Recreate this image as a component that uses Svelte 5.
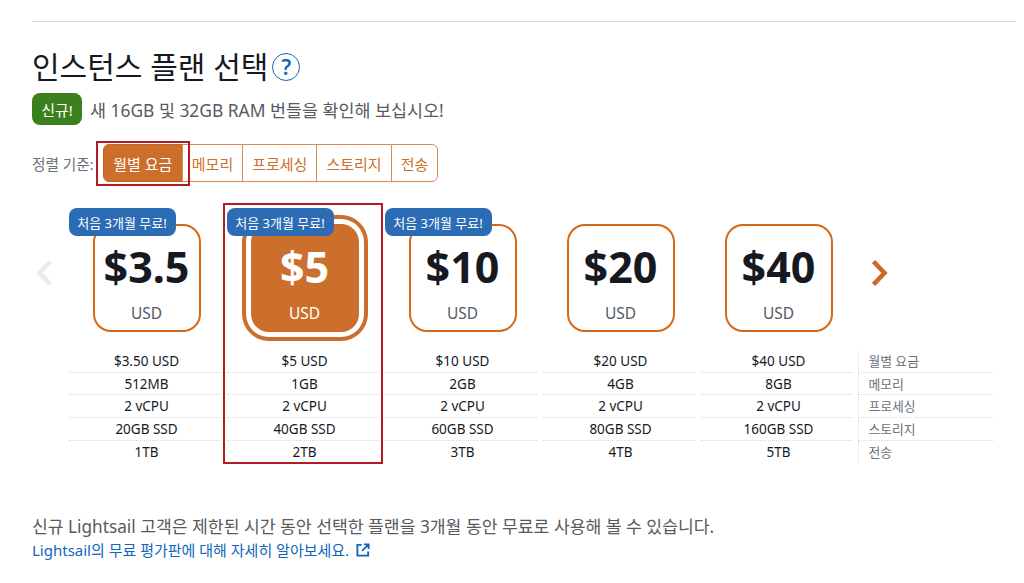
<script lang="ts">
	const sorts = ['월별 요금', '메모리', '프로세싱', '스토리지', '전송'];
	const plans = [
		{ price: '$3.5', monthly: '$3.50 USD', memory: '512MB', cpu: '2 vCPU', disk: '20GB SSD', transfer: '1TB', free: true },
		{ price: '$5', monthly: '$5 USD', memory: '1GB', cpu: '2 vCPU', disk: '40GB SSD', transfer: '2TB', free: true, selected: true },
		{ price: '$10', monthly: '$10 USD', memory: '2GB', cpu: '2 vCPU', disk: '60GB SSD', transfer: '3TB', free: true },
		{ price: '$20', monthly: '$20 USD', memory: '4GB', cpu: '2 vCPU', disk: '80GB SSD', transfer: '4TB' },
		{ price: '$40', monthly: '$40 USD', memory: '8GB', cpu: '2 vCPU', disk: '160GB SSD', transfer: '5TB' }
	];
	const rows = [
		{ key: 'monthly', label: '월별 요금' },
		{ key: 'memory', label: '메모리' },
		{ key: 'cpu', label: '프로세싱' },
		{ key: 'disk', label: '스토리지' },
		{ key: 'transfer', label: '전송' }
	];
</script>

<main class="page">
	<hr class="rule" />

	<div class="title-row">
		<h1>인스턴스 플랜 선택</h1>
		<span class="help">?</span>
	</div>

	<div class="promo">
		<span class="new-tag">신규!</span>
		<span>새 16GB 및 32GB RAM 번들을 확인해 보십시오!</span>
	</div>

	<div class="sort-row">
		<span class="sort-label">정렬 기준:</span>
		<div class="sort-group">
			{#each sorts as sort, i}
				<button class="sort-btn" class:active={i === 0}>{sort}</button>
			{/each}
		</div>
	</div>

	<div class="carousel">
		<svg class="arrow" width="16" height="26" viewBox="0 0 16 26" fill="none" stroke="#e9ebed" stroke-width="4.5"><path d="M14.5 1.5 3.5 13l11 11.5"/></svg>
		{#each plans as plan}
			<div class="plan-cell">
				<div class="card" class:selected={plan.selected}>
					{#if plan.free}
						<span class="badge">처음 3개월 무료!</span>
					{/if}
					<span class="price">{plan.price}</span>
					<span class="currency">USD</span>
				</div>
			</div>
		{/each}
		<svg class="arrow next" width="16" height="26" viewBox="0 0 16 26" fill="none" stroke="#cc6a24" stroke-width="4.5"><path d="M1.5 1.5 12.5 13 1.5 24.5"/></svg>
	</div>

	<div class="specs">
		{#each rows as row}
			<div class="spec-row">
				{#each plans as plan}
					<div class="spec-cell">{plan[row.key]}</div>
				{/each}
				<div class="spec-label">{row.label}</div>
			</div>
		{/each}
	</div>

	<p class="note">신규 Lightsail 고객은 제한된 시간 동안 선택한 플랜을 3개월 동안 무료로 사용해 볼 수 있습니다.</p>
	<a class="link" href="#free">
		Lightsail의 무료 평가판에 대해 자세히 알아보세요.
		<svg width="14" height="14" viewBox="0 0 15 15" fill="none" stroke="#1166bb" stroke-width="2"><path d="M6 2H1.5v11.5H13V9M8.5 1.5h5v5M13.5 1.5l-7 7"/></svg>
	</a>

	<!-- annotation boxes from the screenshot -->
	<div class="mark mark-sort"></div>
	<div class="mark mark-plan"></div>
</main>

<style>
:global(body) {
	margin: 0;
	background: #fff;
}

.page {
	position: relative;
	box-sizing: border-box;
	width: 1024px;
	height: 583px;
	padding: 21px 8px 0 32px;
	overflow: hidden;
	font-family: "Noto Sans", "Noto Sans CJK KR", sans-serif;
	color: #16191f;
}

.rule {
	margin: 0;
	border: none;
	border-top: 1px solid #d5dbdb;
}

.title-row {
	display: flex;
	align-items: center;
	gap: 4px;
	height: 40px;
	margin-top: 25px;
}

h1 {
	margin: 0;
	font-size: 30px;
	font-weight: 400;
	line-height: 40px;
}

.help {
	display: flex;
	align-items: center;
	justify-content: center;
	box-sizing: border-box;
	width: 28px;
	height: 28px;
	border: 1px solid #1166bb;
	border-radius: 50%;
	color: #1166bb;
	font-size: 21px;
	font-weight: 600;
}

.promo {
	display: flex;
	align-items: center;
	gap: 8px;
	height: 32px;
	margin-top: 6px;
	font-size: 17.4px;
	color: #545b64;
}

.new-tag {
	display: flex;
	align-items: center;
	justify-content: center;
	width: 50px;
	height: 32px;
	border-radius: 8px;
	background: #3b7f1f;
	color: #fff;
	font-size: 15px;
}

.sort-row {
	display: flex;
	align-items: center;
	gap: 9px;
	height: 38px;
	margin-top: 19px;
}

.sort-label {
	font-size: 14.7px;
	color: #687078;
}

.sort-group {
	display: flex;
	height: 38px;
	border-radius: 6px;
}

.sort-btn {
	height: 38px;
	padding: 0 9px;
	margin-left: -1px;
	border: 1px solid #dd8a52;
	background: #fff;
	color: #cc6f2c;
	font: inherit;
	font-size: 15px;
}
.sort-btn:first-child {
	margin-left: 0;
	padding: 0 8px;
	border-radius: 6px 0 0 6px;
	background: #cc6f2c;
	border-color: #c7651f;
	color: #fff;
	width: 80px;
}
.sort-btn:last-child { border-radius: 0 6px 6px 0; }

.carousel {
	display: flex;
	align-items: flex-start;
	height: 108px;
	margin-top: 42px;
}

.arrow {
	flex-shrink: 0;
	margin: 36px 0 0 4px;
	width: 16px;
}
.arrow:first-child { margin-right: 15.5px; }
.arrow.next { margin-left: 14.5px; }

.plan-cell {
	display: flex;
	justify-content: center;
	width: 158px;
	flex-shrink: 0;
}

.card {
	position: relative;
	display: flex;
	flex-direction: column;
	align-items: center;
	box-sizing: border-box;
	width: 108px;
	height: 108px;
	border: 2px solid #d4691a;
	border-radius: 18px;
	background: #fff;
}
.card.selected {
	background: #cc6f2c;
	border-color: #cc6f2c;
	box-shadow: 0 0 0 5px #fff, 0 0 0 9px #cc6f2c;
	color: #fff;
}

.badge {
	position: absolute;
	top: -18px;
	left: -26px;
	display: flex;
	align-items: center;
	justify-content: center;
	width: 107px;
	height: 28px;
	border-radius: 8px;
	background: #2b6cb5;
	color: #fff;
	font-size: 13px;
	white-space: nowrap;
}

.price {
	margin-top: 11px;
	font-size: 43px;
	font-weight: 700;
	line-height: 60px;
}

.currency {
	margin-top: 6px;
	font-size: 15.5px;
	line-height: 20px;
	color: #545b64;
}
.selected .currency { color: #fff; }

.specs {
	margin: 18px 0 0 35.5px;
}

.spec-row {
	display: flex;
	height: 22.7px;
	font-size: 13.5px;
	line-height: 22px;
}

.spec-cell {
	position: relative;
	width: 158px;
	text-align: center;
}
.spec-row:not(:last-child) .spec-cell::after {
	content: '';
	position: absolute;
	left: 1.5px;
	right: 4.5px;
	bottom: 0;
	border-bottom: 1px dotted #d5dbdb;
}

.spec-label {
	flex: 1;
	padding-left: 10px;
	margin-right: 22px;
	border-left: 1px dotted #d5dbdb;
	color: #687078;
	font-size: 12.8px;
}
.spec-row:not(:last-child) .spec-label { border-bottom: 1px dotted #d5dbdb; }

.note {
	margin: 52px 0 0;
	font-size: 17.2px;
	line-height: 24px;
	color: #545b64;
}

.link {
	display: flex;
	align-items: center;
	gap: 7px;
	font-size: 15px;
	line-height: 22px;
	color: #1166bb;
	text-decoration: none;
}

.mark {
	position: absolute;
	box-sizing: border-box;
	border: 2px solid #b01c22;
	pointer-events: none;
}
.mark-sort { left: 96px; top: 141px; width: 94px; height: 45px; }
.mark-plan { left: 223px; top: 203px; width: 160px; height: 261px; }
</style>
